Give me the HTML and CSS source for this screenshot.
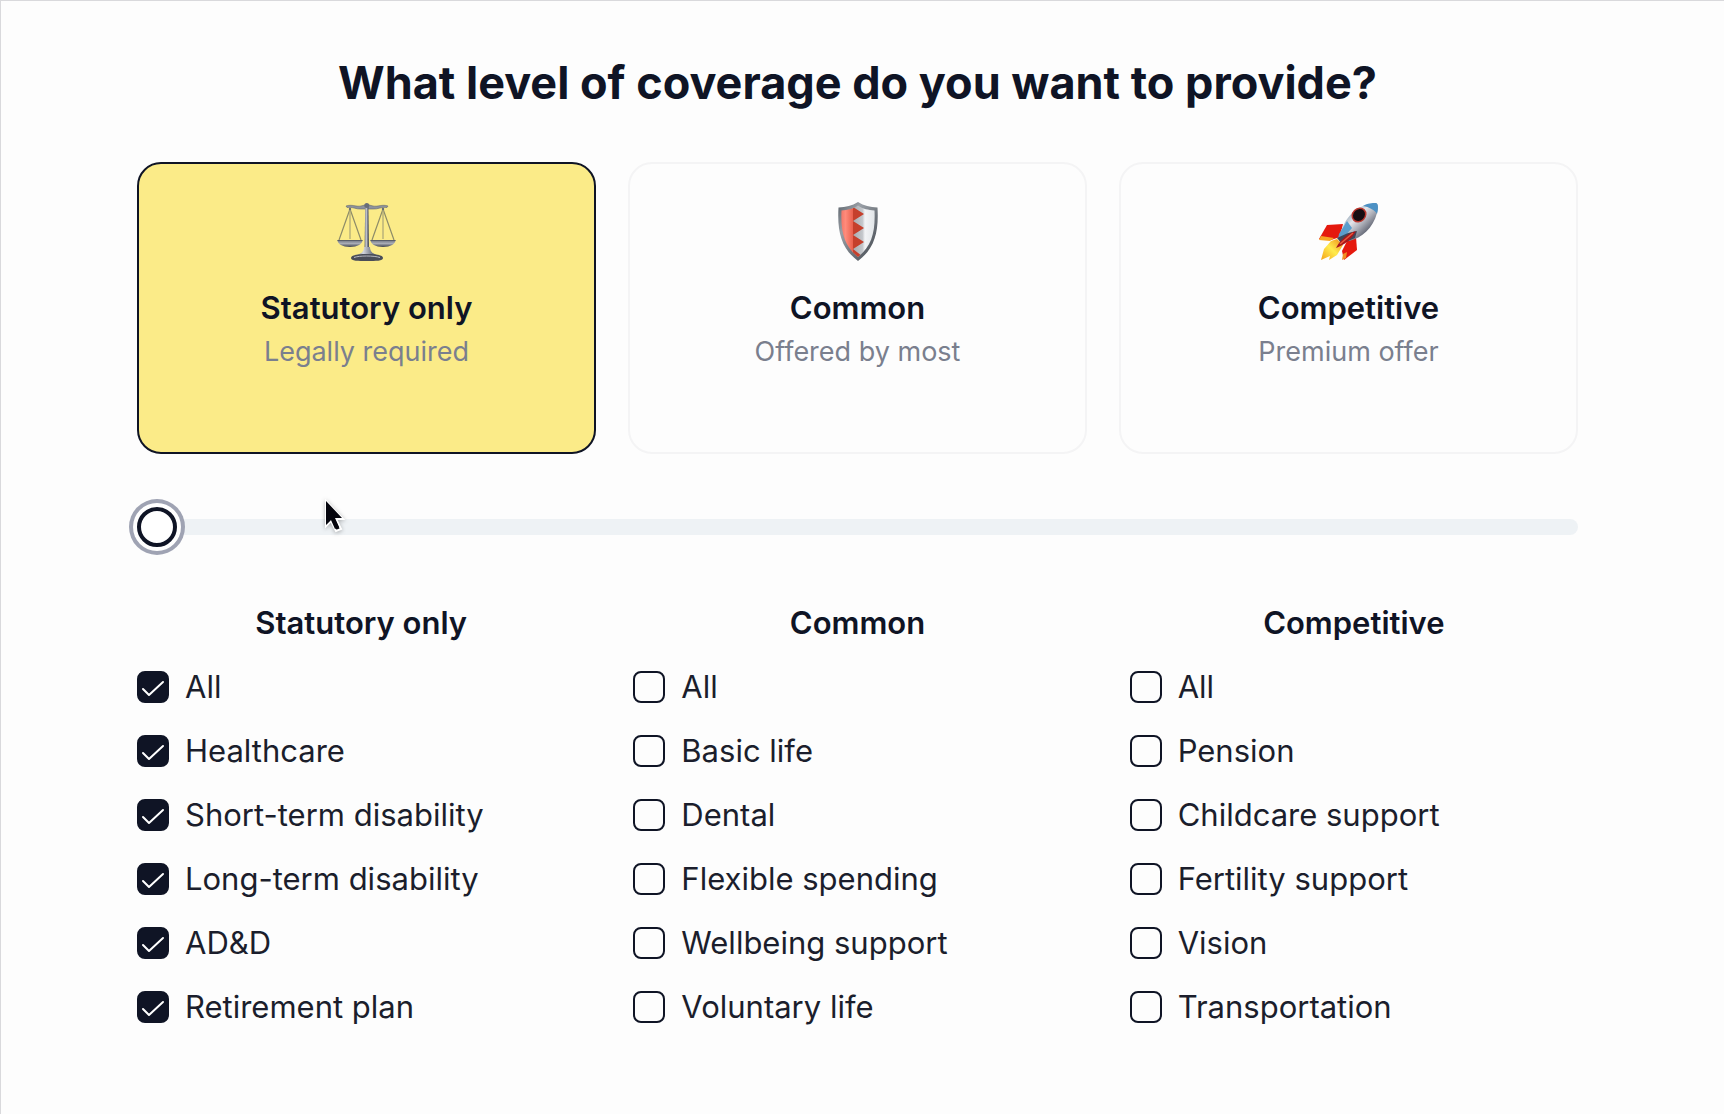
FILE: index.html
```html
<!DOCTYPE html>
<html lang="en">
<head>
<meta charset="utf-8">
<meta name="viewport" content="width=device-width, initial-scale=1">
<title>Coverage level</title>
<link rel="stylesheet" href="styles.css">
</head>
<body>
<main class="page">
  <h1 class="title">What level of coverage do you want to provide?</h1>

  <div class="cards">
    <button class="card card-selected" type="button" aria-pressed="true">
      <svg class="card-icon" viewBox="0 0 60 60" aria-hidden="true">
        <defs>
          <linearGradient id="steel" x1="0" x2="1" y1="0" y2="0">
            <stop offset="0" stop-color="#4d5260"/><stop offset=".35" stop-color="#d5d7de"/><stop offset=".65" stop-color="#7e8390"/><stop offset="1" stop-color="#363a46"/>
          </linearGradient>
          <linearGradient id="pan" x1="0" x2="0" y1="0" y2="1">
            <stop offset="0" stop-color="#6d727e"/><stop offset=".5" stop-color="#a9acb5"/><stop offset="1" stop-color="#3d414c"/>
          </linearGradient>
        </defs>
        <g fill="none" stroke="#8e8c68" stroke-width="1.200">
          <path d="M13 7 2 38M13 7l11 31M46 7 35 38M46 7l11 31"/>
          <path d="M13 7v30M46 7v30" stroke="#aaa577"/>
        </g>
        <path d="M9 4c6-2 10 1 15 0l4-1h4l4 1c5 1 9-2 15 0l-1 1.500c-6-1-9 2-14 1.500h-12c-5 .5-8-2.500-14-1.500z" fill="#8e929d" stroke="#62666f" stroke-width=".6"/>
        <path d="M28.200 4h3.200l.6 43h-4.400z" fill="url(#steel)"/>
        <circle cx="29.800" cy="3.500" r="2.500" fill="#686d79"/>
        <circle cx="13" cy="7" r="1.200" fill="#686d79"/><circle cx="46" cy="7" r="1.200" fill="#686d79"/>
        <path d="M.5 38h25c0 4-5 7-12.500 7S.5 42 .5 38zM33.500 38h25c0 4-5 7-12.500 7s-12.500-3-12.500-7z" fill="url(#pan)"/>
        <path d="M.5 38.500h25M33.500 38.500h25" stroke="#595e69"/>
        <path d="M27 45h6c0 5 3 7 10 9H17c7-2 10-4 10-9z" fill="url(#steel)"/>
        <path d="M14 56c0-3 7-4 16-4s16 1 16 4-7 3-16 3-16 0-16-3z" fill="#4a4d58"/>
        <path d="M17 55.500c5-2 20-2 26 0" fill="none" stroke="#b7b8c0"/>
      </svg>
      <span class="card-name">Statutory only</span>
      <span class="card-note">Legally required</span>
    </button>
    <button class="card" type="button" aria-pressed="false">
      <svg class="card-icon" viewBox="0 0 60 60" aria-hidden="true">
        <defs>
          <linearGradient id="rim" x1="0" x2="1" y1="0" y2="1">
            <stop offset="0" stop-color="#5c636b"/><stop offset=".3" stop-color="#9aa0a7"/><stop offset=".6" stop-color="#70767d"/><stop offset="1" stop-color="#41464d"/>
          </linearGradient>
          <linearGradient id="red" x1="0" x2="1" y1="0" y2="0">
            <stop offset="0" stop-color="#e9695c"/><stop offset=".5" stop-color="#ff8b7b"/><stop offset="1" stop-color="#e9604d"/>
          </linearGradient>
          <linearGradient id="silver" x1="0" x2="1" y1="0" y2="0">
            <stop offset="0" stop-color="#a4a8ac"/><stop offset=".4" stop-color="#c4c7cb"/><stop offset=".5" stop-color="#f2f4f6"/><stop offset="1" stop-color="#dde1e4"/>
          </linearGradient>
          <clipPath id="face"><path d="M30 3.500c5 3.500 10 4.500 16.500 5 1 22-3 36-16.500 46.500C16.500 44.500 12.500 30.500 13.500 8.500 20 8 25 7 30 3.500z"/></clipPath>
        </defs>
        <path d="M30 0c6 4 12 5 19.500 5.500C51 31 46 47 30 59 14 47 9 31 10.500 5.500 18 5 24 4 30 0z" fill="url(#rim)"/>
        <g clip-path="url(#face)">
          <path d="M24 0h26v60H24z" fill="url(#silver)"/>
          <path d="M10 0h15v60H10z" fill="url(#red)"/>
          <path d="M25 5l11 7-11 7zM25 19l11 7-11 7zM25 33l11 7-11 7zM25 47l9 7-9 6z" fill="#c5402c"/>
        </g>
      </svg>
      <span class="card-name">Common</span>
      <span class="card-note">Offered by most</span>
    </button>
    <button class="card" type="button" aria-pressed="false">
      <svg class="card-icon" viewBox="0 0 60 60" aria-hidden="true">
        <defs>
          <linearGradient id="hull" x1=".2" x2=".8" y1=".2" y2=".8">
            <stop offset="0" stop-color="#7f99ad"/><stop offset=".35" stop-color="#e5e5e9"/><stop offset=".6" stop-color="#aeb0b9"/><stop offset="1" stop-color="#474c5c"/>
          </linearGradient>
          <linearGradient id="fire" x1="1" x2="0" y1="0" y2="1">
            <stop offset="0" stop-color="#f08a18"/><stop offset=".5" stop-color="#ffec4d"/><stop offset="1" stop-color="#f5a318"/>
          </linearGradient>
        </defs>
        <path d="M24 22 8 23 0 37l12 1 9-3z" fill="#e5190e"/>
        <path d="m2 34-2 4 11 1 4-3z" fill="#f7a524"/>
        <path d="m37 35 1 13-13 10-2-9 6-12z" fill="#e5190e"/>
        <path d="m24 52-1 6 4-2 1-6z" fill="#ef8f22"/>
        <path d="M12 39 5 47 2 58l9-4-1 4 8-5 6-10-6-6z" fill="url(#fire)"/>
        <path d="M21 33C25 16 38 2 57 1c3 1 2 7 1 10-4 15-15 25-28 28z" fill="url(#hull)"/>
        <path d="M44 4c5-3 9-3 13-3 3 1 2 7 1 11-2-4-8-7-14-8z" fill="#4d91c4"/>
        <path d="m28 19-8 13-1 5 8-4 6-7z" fill="#5b9dcc"/>
        <path d="m18 36 11-5 9-2-2 7-9 4-5 1z" fill="#3f4658"/>
        <ellipse cx="40" cy="13" rx="8" ry="7" transform="rotate(-45 40 13)" fill="#b9372e"/>
        <ellipse cx="40" cy="13" rx="6.500" ry="5.500" transform="rotate(-45 40 13)" fill="#160e12"/>
        <path d="M37 29c-8 2-16 9-20 17 8-3 15-8 20-17z" fill="#a9151a"/>
        <path d="m34 31-13 11" stroke="#e85a3c" stroke-width="1.500"/>
      </svg>
      <span class="card-name">Competitive</span>
      <span class="card-note">Premium offer</span>
    </button>
  </div>

  <div class="level">
    <input class="slider" type="range" min="0" max="2" value="0" aria-label="Coverage level">
    <svg class="pointer" viewBox="0 0 24 36" aria-hidden="true">
      <path d="M3 2v25l5-5 5 10 5-2-5-10h7z" fill="#05050d" stroke="#fff" stroke-width="2"/>
      <path d="M3 2v24l5-5 4 9 4-2-4-9h7z" fill="#05050d"/>
    </svg>
  </div>

  <div class="columns">
    <fieldset class="group">
      <legend class="group-name">Statutory only</legend>
      <label class="option"><input class="box" type="checkbox" checked>All</label>
      <label class="option"><input class="box" type="checkbox" checked>Healthcare</label>
      <label class="option"><input class="box" type="checkbox" checked>Short-term disability</label>
      <label class="option"><input class="box" type="checkbox" checked>Long-term disability</label>
      <label class="option"><input class="box" type="checkbox" checked>AD&amp;D</label>
      <label class="option"><input class="box" type="checkbox" checked>Retirement plan</label>
    </fieldset>
    <fieldset class="group">
      <legend class="group-name">Common</legend>
      <label class="option"><input class="box" type="checkbox">All</label>
      <label class="option"><input class="box" type="checkbox">Basic life</label>
      <label class="option"><input class="box" type="checkbox">Dental</label>
      <label class="option"><input class="box" type="checkbox">Flexible spending</label>
      <label class="option"><input class="box" type="checkbox">Wellbeing support</label>
      <label class="option"><input class="box" type="checkbox">Voluntary life</label>
    </fieldset>
    <fieldset class="group">
      <legend class="group-name">Competitive</legend>
      <label class="option"><input class="box" type="checkbox">All</label>
      <label class="option"><input class="box" type="checkbox">Pension</label>
      <label class="option"><input class="box" type="checkbox">Childcare support</label>
      <label class="option"><input class="box" type="checkbox">Fertility support</label>
      <label class="option"><input class="box" type="checkbox">Vision</label>
      <label class="option"><input class="box" type="checkbox">Transportation</label>
    </fieldset>
  </div>
</main>
</body>
</html>
```
FILE: styles.css
```css
:root {
  --ink: #0f1425;
  --text: #1b1e2c;
  --muted: #7a7f8e;
  --paper: #fdfdfd;
}

* { box-sizing: border-box; }

body {
  margin: 0;
  background: var(--paper);
  color: var(--ink);
  font-family: Inter, "Liberation Sans", sans-serif;
}

.page {
  min-height: 100vh;
  padding: 54px 146px 48px 136px;
  border-top: 1px solid #d9d9dc;
  border-left: 1px solid #d9d9dc;
}

.title {
  margin: 0 0 51px;
  font-size: 45px;
  line-height: 56px;
  font-weight: 700;
  text-align: center;
}

.cards {
  display: grid;
  grid-template-columns: repeat(3, 1fr);
  gap: 32px;
}

.card {
  display: flex;
  flex-direction: column;
  align-items: center;
  padding: 38px 16px 82px;
  border: 2px solid #f4f4f5;
  border-radius: 24px;
  background: transparent;
  color: inherit;
  font: inherit;
}

.card-selected {
  border-color: var(--ink);
  background: #fbeb88;
}

.card-icon {
  width: 60px;
  height: 60px;
  margin-bottom: 28px;
}

.card-name {
  margin-bottom: 8px;
  font-size: 31px;
  line-height: 36px;
  font-weight: 600;
}

.card-note {
  color: var(--muted);
  font-size: 27px;
  line-height: 36px;
}

.level {
  position: relative;
  margin: 45px 0 48px;
}

.slider {
  appearance: none;
  display: block;
  width: 100%;
  height: 56px;
  margin: 0;
  background: transparent;
}

.slider::-webkit-slider-runnable-track {
  height: 16px;
  border-radius: 8px;
  background: #eef2f5;
}

.slider::-webkit-slider-thumb {
  appearance: none;
  width: 40px;
  height: 40px;
  margin-top: -12px;
  border: 4px solid var(--ink);
  border-radius: 50%;
  background: #fff;
  box-shadow: 0 0 0 4px #fff, 0 0 0 8px #9fa3b3;
}

.pointer {
  position: absolute;
  top: 0;
  left: 186px;
  width: 24px;
  height: 36px;
  filter: drop-shadow(0 1px 2px rgba(0, 0, 0, .3));
}

.columns {
  display: grid;
  grid-template-columns: repeat(3, 1fr);
  gap: 48px;
}

.group {
  min-width: 0;
  margin: 0;
  padding: 0;
  border: 0;
}

.group-name {
  width: 100%;
  padding: 0 0 28px;
  font-size: 31px;
  line-height: 40px;
  font-weight: 600;
  text-align: center;
}

.option {
  display: flex;
  align-items: center;
  gap: 16px;
  margin-bottom: 32px;
  color: var(--text);
  font-size: 31px;
  line-height: 32px;
}

.box {
  appearance: none;
  flex: none;
  width: 32px;
  height: 32px;
  margin: 0;
  border: 2px solid var(--ink);
  border-radius: 8px;
}

.box:checked {
  background: var(--ink) url("data:image/svg+xml,%3Csvg xmlns='http://www.w3.org/2000/svg' viewBox='0 0 32 32'%3E%3Cpath d='M6 18l6 6L26 11' fill='none' stroke='white' stroke-width='2' stroke-linecap='round' stroke-linejoin='round'/%3E%3C/svg%3E") center / 32px 32px no-repeat;
}
```
